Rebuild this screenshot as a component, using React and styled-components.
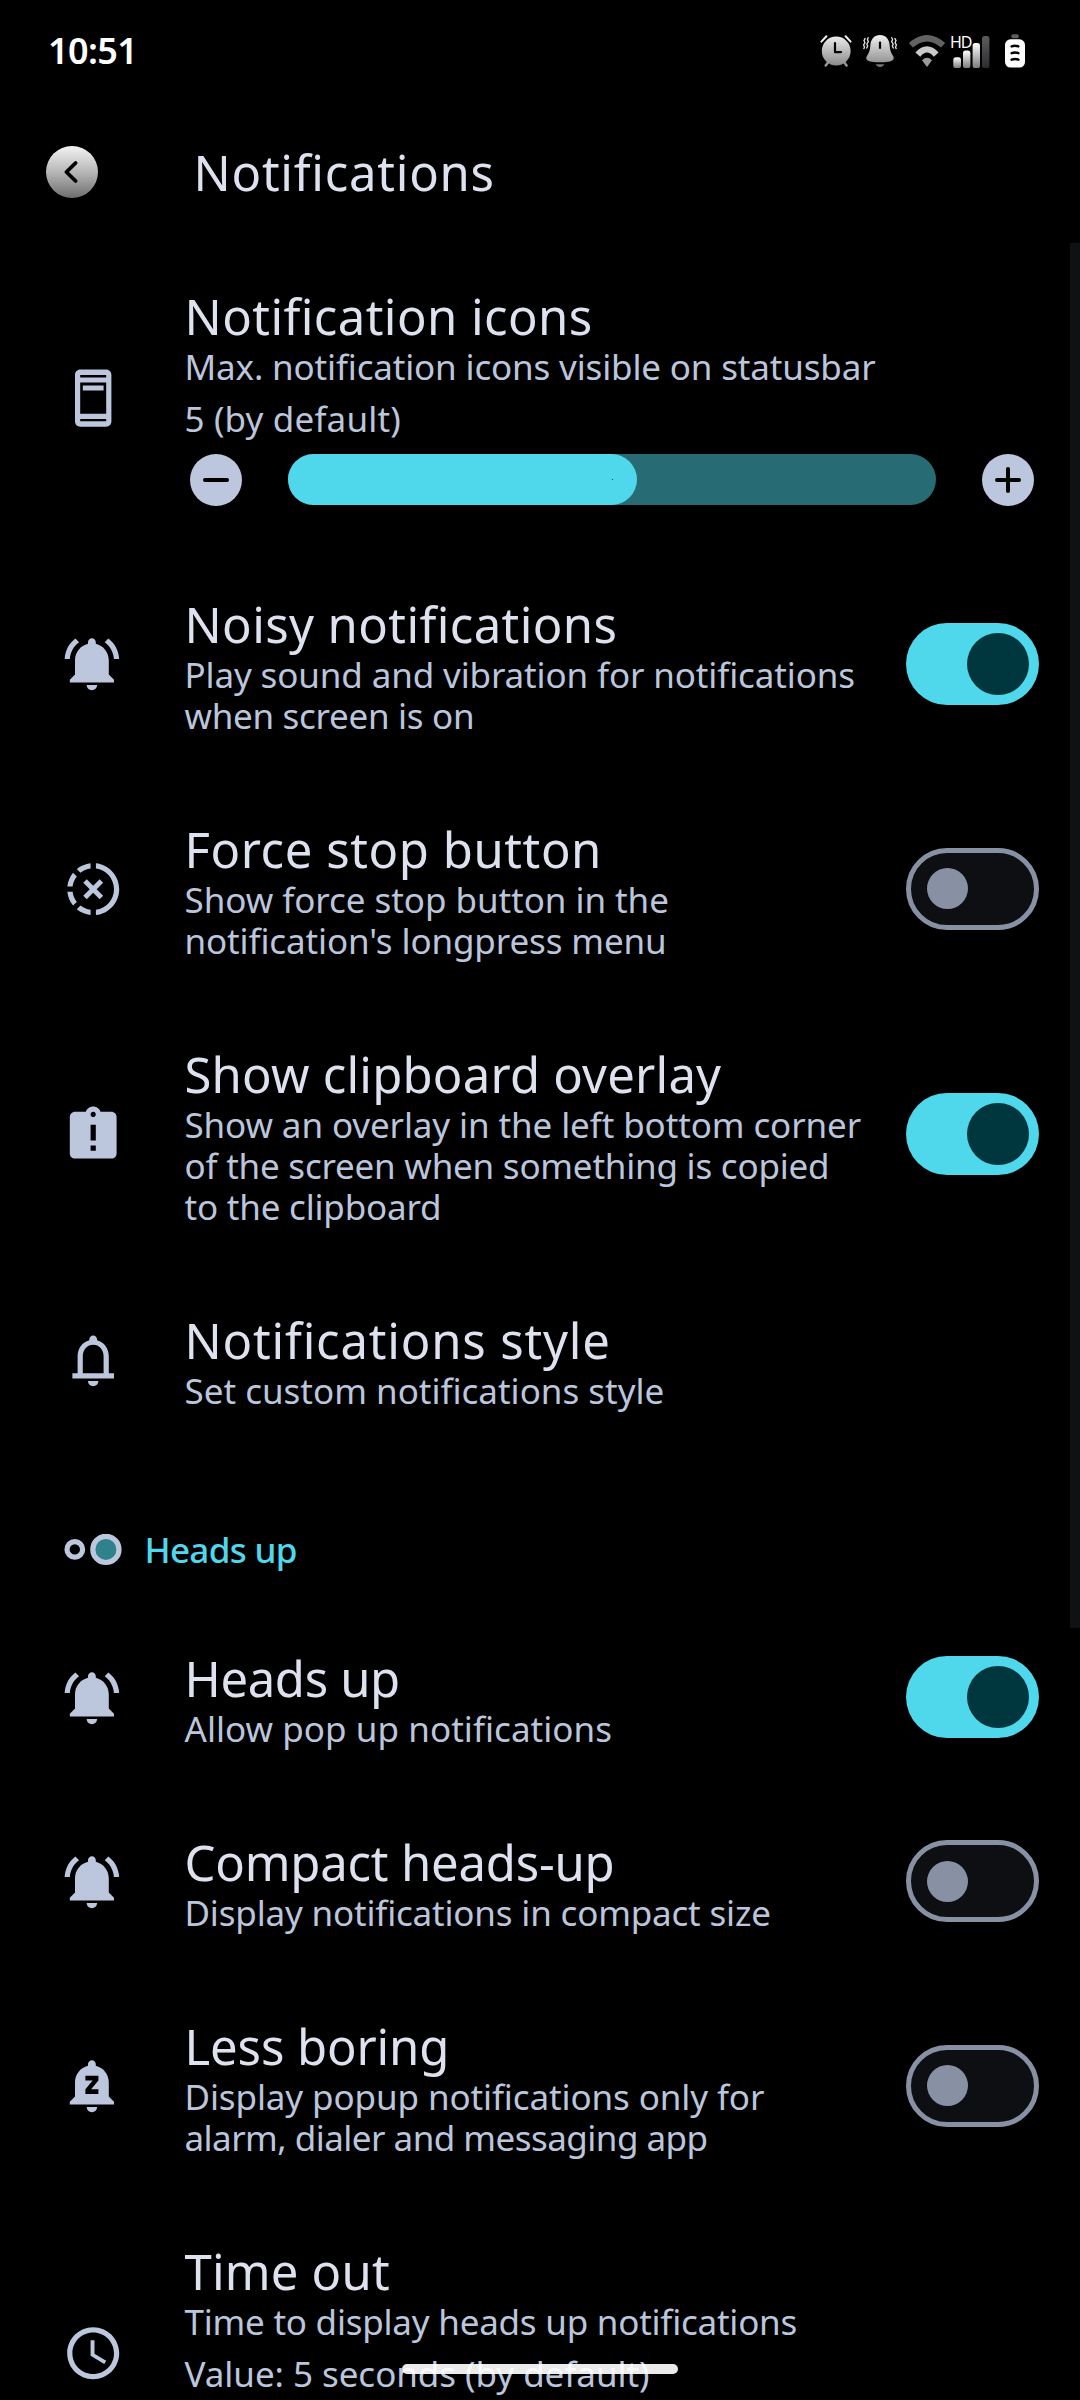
import React from "react";
import styled, { createGlobalStyle } from "styled-components";

const GlobalStyle = createGlobalStyle`
  * { box-sizing: border-box; }
  body {
    margin: 0;
    background: #000;
    font-family: "Noto Sans", "Open Sans", sans-serif;
    font-kerning: normal;
  }
`;

const Screen = styled.main`
  position: relative;
  display: flex;
  flex-direction: column;
  width: 1080px;
  height: 2400px;
  overflow: hidden;
  background: #000;
`;

const StatusBar = styled.header`
  display: flex;
  align-items: center;
  justify-content: space-between;
  flex: none;
  height: 102px;
  padding: 0 55px 0 48px;
`;

const Clock = styled.span`
  font-size: 36px;
  line-height: 50px;
  font-weight: 600;
  letter-spacing: -0.6px;
  color: #fff;
`;

const StatusIcons = styled.div`
  display: flex;
  align-items: center;
`;

const StatusIcon = styled.svg`
  display: block;
  flex: none;
  margin-left: ${(p) => p.$gap}px;
`;

const HdLabel = styled.text`
  font-family: "Noto Sans", sans-serif;
  font-size: 16px;
  letter-spacing: -1.2px;
  fill: #fff;
`;

const TitleBar = styled.div`
  display: flex;
  align-items: center;
  flex: none;
  height: 141px;
  padding: 0 0 2px 46px;
`;

const BackButton = styled.button`
  display: block;
  width: 52px;
  height: 52px;
  margin: 0 95.5px 0 0;
  padding: 0;
  border: 0;
  border-radius: 50%;
  background: linear-gradient(#f4f4f4, #b4b4b4 52%, #6e6e6e);
`;

const PageTitle = styled.h1`
  margin: 0;
  font-size: 49px;
  line-height: 58px;
  font-weight: 400;
  letter-spacing: 0.76px;
  color: #dee2ef;
`;

const List = styled.div`
  display: flex;
  flex-direction: column;
  flex: none;
`;

const Row = styled.section`
  display: flex;
  align-items: center;
  flex: none;
  padding-right: 41px;
  padding-left: 61.8px;
`;

const RowIcon = styled.svg`
  display: block;
  flex: none;
  width: 62.4px;
  height: 62.4px;
  margin: 1.4px 60.3px 0 0;
  fill: #bcc6dc;
`;

const RowBody = styled.div`
  flex: 1;
  min-width: 0;
  padding: 44px 0 40px;
`;

const RowTitle = styled.h2`
  margin: 0 0 1px;
  font-size: 49px;
  line-height: 58px;
  font-weight: 400;
  letter-spacing: ${(p) => p.$track}px;
  white-space: nowrap;
  color: #dee2ef;
`;

const RowLine = styled.div`
  font-size: 35px;
  line-height: 41px;
  letter-spacing: ${(p) => p.$track}px;
  white-space: nowrap;
  color: #bbc6dc;
`;

const ValueLine = styled(RowLine)`
  margin-top: 11px;
`;

const Toggle = styled.span`
  display: flex;
  align-items: center;
  flex: none;
  justify-content: ${(p) => (p.$on ? "flex-end" : "flex-start")};
  width: 133px;
  height: 82px;
  padding: ${(p) => (p.$on ? "0 10px" : "0 15.5px")};
  border: ${(p) => (p.$on ? "0" : "5px solid #8891a4")};
  border-radius: 41px;
  background: ${(p) => (p.$on ? "#4fd8eb" : "#0e0f13")};
`;

const Thumb = styled.span`
  width: ${(p) => (p.$on ? 62 : 41)}px;
  height: ${(p) => (p.$on ? 62 : 41)}px;
  border-radius: 50%;
  background: ${(p) => (p.$on ? "#00363d" : "#8891a4")};
`;

const SliderRow = styled.div`
  display: flex;
  align-items: flex-start;
  gap: 46px;
  margin: 15px 5px 5px 5.5px;
`;

const StepButton = styled.button`
  flex: none;
  width: 52px;
  height: 52px;
  padding: 0;
  border: 0;
  border-radius: 50%;
  background: #bcc6dc;
`;

const Track = styled.div`
  flex: 1;
  height: 51px;
  border-radius: 25.5px;
  background: #276b74;
`;

const TrackFill = styled.div`
  display: flex;
  align-items: center;
  justify-content: flex-end;
  height: 51px;
  padding-right: 24px;
  border-radius: 25.5px;
  background: #4fd8eb;
`;

const TrackDot = styled.span`
  width: 1px;
  height: 1px;
  background: #00363d;
`;

const SectionHeader = styled.div`
  display: flex;
  align-items: center;
  flex: none;
  height: 154px;
  padding: 43px 0 0 64px;
`;

const SectionIcon = styled.svg`
  display: block;
  margin-right: 22.5px;
`;

const SectionTitle = styled.h3`
  margin: 0;
  font-size: 35px;
  line-height: 50px;
  font-weight: 500;
  letter-spacing: -0.7px;
  color: #4fd8eb;
`;

const ScrollThumb = styled.div`
  position: absolute;
  top: 243px;
  right: 0;
  width: 10px;
  height: 1385px;
  background: #101113;
`;

const HomeIndicator = styled.div`
  position: absolute;
  left: 402px;
  bottom: 26px;
  width: 276px;
  height: 10px;
  border-radius: 5px;
  background: rgba(255, 255, 255, 0.92);
`;

const ICONS = {
  statusbar: (
    <path
      fillRule="evenodd"
      d="M7 1h10c1.1 0 2 .9 2 2v18c0 1.1-.9 2-2 2H7c-1.1 0-2-.9-2-2V3c0-1.1.9-2 2-2zM7 3.1h10V4H7zM7 6h10v12H7zM7 20h10v.9H7zM8 7.1h8V9H8z"
    />
  ),
  ringing: (
    <>
      <path d="M11.5 22c1.1 0 2-.9 2-2h-4c0 1.1.9 2 2 2zM18 16v-5.5c0-3.07-2.13-5.64-5-6.32V3.5c0-.83-.67-1.5-1.5-1.5S10 2.67 10 3.5v.68c-2.87.68-5 3.25-5 6.32V16l-2 2v1h17v-1l-2-2z" />
      <path d="M6.58 3.58L5.15 2.15C2.76 3.97 1.18 6.8 1.03 10h2c.15-2.65 1.51-4.97 3.55-6.42zM19.97 10h2c-.15-3.2-1.73-6.03-4.13-7.85l-1.42 1.43c2.02 1.45 3.39 3.77 3.55 6.42z" />
    </>
  ),
  forceStop: (
    <>
      <path d="M11 4.07V2.05c-2.01.2-3.84 1-5.32 2.21L7.1 5.69c1.11-.86 2.44-1.44 3.9-1.62zM5.69 7.1L4.26 5.68C3.05 7.16 2.25 8.99 2.05 11h2.02c.18-1.46.76-2.79 1.62-3.9zM4.07 13H2.05c.2 2.01 1 3.84 2.21 5.32l1.43-1.43c-.86-1.1-1.44-2.43-1.62-3.89zm1.61 6.74C7.16 20.95 9 21.75 11 21.95v-2.02c-1.46-.18-2.79-.76-3.9-1.62l-1.42 1.43zM22 12c0 5.16-3.92 9.42-8.95 9.95v-2.02C16.97 19.41 20 16.05 20 12s-3.03-7.41-6.95-7.93V2.05C18.08 2.58 22 6.84 22 12z" />
      <path d="M8.85 8.85l6.3 6.3M15.15 8.85l-6.3 6.3" stroke="#bcc6dc" strokeWidth="1.9" />
    </>
  ),
  clipboard: (
    <path d="M19 3h-4.18C14.4 1.84 13.3 1 12 1c-1.3 0-2.4.84-2.82 2H5c-1.1 0-2 .9-2 2v14c0 1.1.9 2 2 2h14c1.1 0 2-.9 2-2V5c0-1.1-.9-2-2-2zm-6 15h-2v-2h2v2zm0-4h-2V8h2v6zm-1-9c-.55 0-1-.45-1-1s.45-1 1-1 1 .45 1 1-.45 1-1 1z" />
  ),
  bell: (
    <path
      fillRule="evenodd"
      d="M4 19v-2h2v-6.5c0-3 1.8-5.5 4.5-6.2V4c0-.83.67-1.5 1.5-1.5s1.5.67 1.5 1.5v.3c2.7.7 4.5 3.2 4.5 6.2V17h2v2zM8 17h8v-6.5C16 8 14.3 6.1 12 6.1S8 8 8 10.5zM12 22c1.1 0 2-.9 2-2h-4c0 1.1.9 2 2 2z"
    />
  ),
  snooze: (
    <path d="M11.5 22c1.1 0 2-.9 2-2h-4c0 1.1.9 2 2 2zM18 16v-5.5c0-3.07-2.13-5.64-5-6.32V3.5c0-.83-.67-1.5-1.5-1.5S10 2.67 10 3.5v.68c-2.87.68-5 3.25-5 6.32V16l-2 2v1h17v-1l-2-2zm-4-6.2l-2.8 3.4H14V15H9v-1.8l2.8-3.4H9V8h5v1.8z" />
  ),
  clock: (
    <>
      <path d="M11.99 2C6.47 2 2 6.48 2 12s4.47 10 9.99 10C17.52 22 22 17.52 22 12S17.52 2 11.99 2zM12 20c-4.42 0-8-3.58-8-8s3.58-8 8-8 8 3.58 8 8-3.58 8-8 8z" />
      <path d="M12.5 7H11v6l5.25 3.15.75-1.23-4.5-2.67z" />
    </>
  ),
};

const BEFORE_SECTION = [
  {
    icon: "statusbar",
    title: ["Notification icons", 0.44],
    lines: [["Max. notification icons visible on statusbar", -0.16]],
    value: ["5 (by default)", 0.16],
    fill: 349,
  },
  {
    icon: "ringing",
    title: ["Noisy notifications", 0.4],
    lines: [
      ["Play sound and vibration for notifications", -0.13],
      ["when screen is on", -0.3],
    ],
    on: true,
  },
  {
    icon: "forceStop",
    title: ["Force stop button", 0.58],
    lines: [
      ["Show force stop button in the", -0.05],
      ["notification's longpress menu", -0.12],
    ],
    on: false,
  },
  {
    icon: "clipboard",
    title: ["Show clipboard overlay", 0.22],
    lines: [
      ["Show an overlay in the left bottom corner", -0.11],
      ["of the screen when something is copied", -0.22],
      ["to the clipboard", -0.2],
    ],
    on: true,
  },
  {
    icon: "bell",
    title: ["Notifications style", 0.82],
    lines: [["Set custom notifications style", 0]],
  },
];

const HEADS_UP = [
  {
    icon: "ringing",
    title: ["Heads up", -0.35],
    lines: [["Allow pop up notifications", 0.05]],
    on: true,
  },
  {
    icon: "ringing",
    title: ["Compact heads-up", -0.2],
    lines: [["Display notifications in compact size", -0.18]],
    on: false,
  },
  {
    icon: "snooze",
    title: ["Less boring", -0.12],
    lines: [
      ["Display popup notifications only for", -0.11],
      ["alarm, dialer and messaging app", -0.53],
    ],
    on: false,
  },
  {
    icon: "clock",
    title: ["Time out", 0.2],
    lines: [["Time to display heads up notifications", -0.23]],
    value: ["Value: 5 seconds (by default)", -0.05],
    fill: 349,
  },
];

function Slider({ fill }) {
  return (
    <SliderRow>
      <StepButton aria-label="Decrease">
        <svg width="52" height="52" viewBox="0 0 52 52" stroke="#000" strokeWidth="4" strokeLinecap="round">
          <path d="M15 26h22" />
        </svg>
      </StepButton>
      <Track>
        <TrackFill style={{ width: fill }}>
          <TrackDot />
        </TrackFill>
      </Track>
      <StepButton aria-label="Increase">
        <svg width="52" height="52" viewBox="0 0 52 52" stroke="#000" strokeWidth="4" strokeLinecap="round">
          <path d="M15 26h22M26 15v22" />
        </svg>
      </StepButton>
    </SliderRow>
  );
}

function Setting({ item }) {
  return (
    <Row>
      <RowIcon viewBox="0 0 24 24">{ICONS[item.icon]}</RowIcon>
      <RowBody>
        <RowTitle $track={item.title[1]}>{item.title[0]}</RowTitle>
        {item.lines.map(([text, track]) => (
          <RowLine key={text} $track={track}>
            {text}
          </RowLine>
        ))}
        {item.value && <ValueLine $track={item.value[1]}>{item.value[0]}</ValueLine>}
        {item.fill && <Slider fill={item.fill} />}
      </RowBody>
      {item.on !== undefined && (
        <Toggle $on={item.on}>
          <Thumb $on={item.on} />
        </Toggle>
      )}
    </Row>
  );
}

function StatusTray() {
  return (
    <StatusIcons>
      <StatusIcon $gap={0} width="32" height="32" viewBox="0 0 32 32">
        <defs>
          <linearGradient id="silver" x1="0" y1="0" x2="0" y2="32" gradientUnits="userSpaceOnUse">
            <stop offset="0" stopColor="#f0f0f0" />
            <stop offset="1" stopColor="#858585" />
          </linearGradient>
        </defs>
        <circle cx="16.2" cy="16" r="14.4" fill="url(#silver)" />
        <path d="M8 27.5l-2.3 3M24.3 27.5l2.3 3" stroke="#999" strokeWidth="2.4" strokeLinecap="round" />
        <path d="M1.4 6.6L6.4 1.2M25.6 1.2l5 5.4" stroke="#000" strokeWidth="5" />
        <path d="M1.4 6.6L6.4 1.2M25.6 1.2l5 5.4" stroke="#f0f0f0" strokeWidth="2" strokeLinecap="round" />
        <path d="M15 8v9.2h6" fill="none" stroke="#000" strokeWidth="2.2" strokeLinecap="round" strokeLinejoin="round" />
      </StatusIcon>
      <StatusIcon $gap={11} width="34" height="32" viewBox="0 0 34 32">
        <path
          d="M17 0c5.6 0 9.2 4 9.6 10 .3 5 1.2 7.6 3.2 10.4 2.5 3.6-.3 5.6-4.3 6.3-5.5.8-11.5.8-17 0-4-.7-6.8-2.7-4.3-6.3C6.2 17.6 7.1 15 7.4 10 7.8 4 11.4 0 17 0z"
          fill="url(#silver)"
        />
        <path d="M12.8 29.2h8.4c-.8 1.8-2.3 2.8-4.2 2.8s-3.4-1-4.2-2.8z" fill="#777" />
        <path d="M17 7.5v5.5" stroke="#000" strokeWidth="2.2" strokeLinecap="round" />
        <path
          d="M5.4 2.2l-1 2.5 1 2-1.6 2.3.8 2-1.1 2.5M2.3 3l-1.3 2.6.9 2-1.3 2.3.9 2.2-.8 2M28.6 2.2l1 2.5-1 2 1.6 2.3-.8 2 1.1 2.5M31.7 3l1.3 2.6-.9 2 1.3 2.3-.9 2.2.8 2"
          fill="none"
          stroke="#e6e6e6"
          strokeWidth="1.3"
        />
      </StatusIcon>
      <StatusIcon $gap={11} width="38" height="32" viewBox="0 0 38 32">
        <path d="M2.9 10.3Q19-3.9 35.1 10.3" fill="none" stroke="#626262" strokeWidth="6.2" />
        <path d="M9.8 19.6Q19 9.2 28.2 19.6" fill="none" stroke="#c9c9c9" strokeWidth="6.4" />
        <path d="M14 25.2q5-4.8 10 0L19 32z" fill="#9a9a9a" />
      </StatusIcon>
      <StatusIcon $gap={1} width="44" height="46" viewBox="-3 -6 44 46">
        <defs>
          <linearGradient id="barTone" x1="0" y1="0" x2="0" y2="1">
            <stop offset="0" stopColor="#fff" />
            <stop offset="1" stopColor="#7c7c7c" />
          </linearGradient>
          <linearGradient id="dimTone" x1="0" y1="0" x2="0" y2="1">
            <stop offset="0" stopColor="#5c5c5e" />
            <stop offset="1" stopColor="#2c2c30" />
          </linearGradient>
        </defs>
        <rect x="3.3" y="23.3" width="7.7" height="10.7" rx="2.6" fill="url(#barTone)" />
        <rect x="13" y="16.6" width="7.4" height="17.4" rx="2.6" fill="url(#barTone)" />
        <rect x="22.6" y="9" width="7.4" height="25" rx="2.6" fill="url(#barTone)" />
        <rect x="32" y="2" width="7.4" height="32" rx="2.6" fill="url(#dimTone)" />
        <HdLabel x="0" y="14.3">HD</HdLabel>
      </StatusIcon>
      <StatusIcon $gap={14} width="20" height="34" viewBox="0 0 20 34">
        <rect x="6.3" y="0.3" width="7.5" height="4" rx="1.8" fill="#5e5e5e" />
        <rect x="0" y="5.3" width="20" height="28.3" rx="5.5" fill="#fff" />
        <path d="M6.6 12.4q3.4-1.4 6.8 0M6.6 19.2q3.4-1.4 6.8 0M6.6 25.7q3.4-1.4 6.8 0" fill="none" stroke="#000" strokeWidth="2.4" strokeLinecap="round" />
      </StatusIcon>
    </StatusIcons>
  );
}

export default function App() {
  return (
    <Screen>
      <GlobalStyle />
      <StatusBar>
        <Clock>10:51</Clock>
        <StatusTray />
      </StatusBar>
      <TitleBar>
        <BackButton aria-label="Back">
          <svg width="52" height="52" viewBox="0 0 52 52" fill="none" stroke="#000" strokeWidth="3.8" strokeLinecap="round" strokeLinejoin="round">
            <path d="M29.6 17L20.4 26l9.2 9" />
          </svg>
        </BackButton>
        <PageTitle>Notifications</PageTitle>
      </TitleBar>
      <List>
        {BEFORE_SECTION.map((item) => (
          <Setting key={item.title[0]} item={item} />
        ))}
        <SectionHeader>
          <SectionIcon width="58" height="32" viewBox="0 0 58 32">
            <circle cx="10.8" cy="15.4" r="7.8" fill="none" stroke="#bcc6dc" strokeWidth="5.2" />
            <circle cx="41.9" cy="15.4" r="13.1" fill="#2f828c" stroke="#bcc6dc" strokeWidth="5.2" />
          </SectionIcon>
          <SectionTitle>Heads up</SectionTitle>
        </SectionHeader>
        {HEADS_UP.map((item) => (
          <Setting key={item.title[0]} item={item} />
        ))}
      </List>
      <ScrollThumb />
      <HomeIndicator />
    </Screen>
  );
}
